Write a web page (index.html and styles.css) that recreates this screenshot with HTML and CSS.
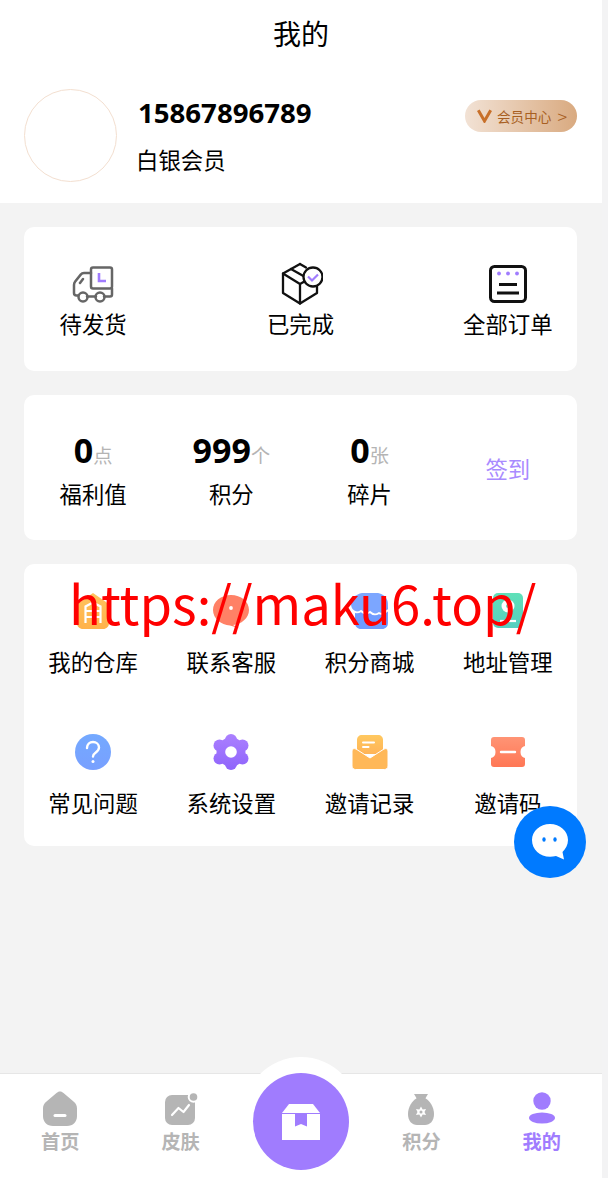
FILE: index.html
```html
<!DOCTYPE html>
<html lang="zh">
<head>
<meta charset="utf-8">
<title>我的</title>
<link rel="stylesheet" href="styles.css">
</head>
<body>
<div class="page">
  <header class="top">
    <h1 class="title">我的</h1>
    <div class="profile">
      <div class="avatar"></div>
      <div class="who">
        <div class="phone">15867896789</div>
        <div class="level">白银会员</div>
      </div>
      <div class="vip">
        <svg class="vip-v" viewBox="0 0 15 14"><path d="M1.300 1.200L7.500 12 13.700 1.200" fill="none" stroke="#c8702a" stroke-width="3"/></svg>
        <span class="vip-text">会员中心</span>
        <span class="vip-arrow">&gt;</span>
      </div>
    </div>
  </header>

  <main class="content">
    <section class="card orders">
      <div class="cell">
        <svg class="ico-order" viewBox="0 0 44 44"><g fill="none" stroke="#666" stroke-width="2.500" stroke-linejoin="round" stroke-linecap="round"><rect x="20" y="5.500" width="21" height="21" rx="2"/><path d="M20 11h-7c-1.500 0-2.500.6-3.300 1.600l-5.500 7c-.8 1-1.200 2-1.200 3.400v8c0 1.500 1 2.500 2.500 2.500h1.500M16 34.500h9M33 34.500h6c1.300 0 2-.8 2-2v-6"/><circle cx="12" cy="35" r="4.500"/><circle cx="29" cy="35" r="4.500"/><path d="M9 21l3-4"/></g><path d="M28 11v8h7" fill="none" stroke="#a07cfe" stroke-width="2.600"/></svg>
        <div class="label">待发货</div>
      </div>
      <div class="cell">
        <svg class="ico-order" viewBox="0 0 44 44"><g fill="none" stroke="#111" stroke-width="2.300" stroke-linejoin="round" stroke-linecap="round"><path d="M21 2L4 11.500V31l17 10.500L38 31v-9"/><path d="M4 11.500L21 22v19.500M21 22l7-4M12 7l15 8.500M21 2l6 3.500"/><circle cx="34" cy="15" r="9.500" fill="#fff"/></g><path d="M29 14.500l4 4 6-6" fill="none" stroke="#a07cfe" stroke-width="2.200"/></svg>
        <div class="label">已完成</div>
      </div>
      <div class="cell">
        <svg class="ico-order" viewBox="0 0 44 44"><rect x="4.500" y="4.500" width="35" height="35" rx="4" fill="none" stroke="#111" stroke-width="3"/><circle cx="13" cy="11.500" r="1.900" fill="#a07cfe"/><circle cx="22" cy="11.500" r="1.900" fill="#a07cfe"/><circle cx="31" cy="11.500" r="1.900" fill="#a07cfe"/><path d="M13 22.500h18M11 31h22" stroke="#111" stroke-width="2.800"/></svg>
        <div class="label">全部订单</div>
      </div>
    </section>

    <section class="card stats">
      <div class="cell">
        <div class="stat"><b class="num">0</b><span class="unit">点</span></div>
        <div class="label">福利值</div>
      </div>
      <div class="cell">
        <div class="stat"><b class="num">999</b><span class="unit">个</span></div>
        <div class="label">积分</div>
      </div>
      <div class="cell">
        <div class="stat"><b class="num">0</b><span class="unit">张</span></div>
        <div class="label">碎片</div>
      </div>
      <div class="cell sign">签到</div>
    </section>

    <section class="card menu">
      <div class="cell">
        <svg class="ico-menu" viewBox="0 0 38 36"><defs><linearGradient id="gOrange" x1="0" y1="0" x2="0" y2="1"><stop offset="0" stop-color="#ffc35e"/><stop offset="1" stop-color="#ffb24a"/></linearGradient></defs><path d="M19 0l13 9c2 1.500 3 3 3 5.500V30c0 3.500-2.500 6-6 6H9c-3.500 0-6-2.500-6-6V14.500C3 12 4 10.500 6 9z" fill="url(#gOrange)"/><path d="M11.500 30V13.500l7.500-4 7.500 4V30M11.500 18h15M11.500 24h15" fill="none" stroke="#fff" stroke-width="2.200"/></svg>
        <div class="label">我的仓库</div>
      </div>
      <div class="cell">
        <svg class="ico-menu" viewBox="0 0 38 36"><path d="M19 2c10 0 18 6.500 18 15 0 8-8 14.500-16 15l7 3.500-10-3C9 32 1 25.500 1 17 1 8.500 9 2 19 2z" fill="#ff8166"/><circle cx="19" cy="15" r="1.900" fill="#fff"/></svg>
        <div class="label">联系客服</div>
      </div>
      <div class="cell">
        <svg class="ico-menu" viewBox="0 0 38 36"><path d="M4 12h33v18c0 3.500-2.500 6-6 6H10c-3.500 0-6-2.500-6-6z" fill="#6f9bff"/><path d="M11 0h16c5 1 10 5 10 11 0 5-3 9-8 9H9c-5 0-9-4-9-9S5 1 11 0z" fill="#7ca6ff"/><path d="M1 17c3 3 6 3 9 1 3 3 6 3 9 1 3 3 6 3 9 1 3 2 6 0 9-3" fill="none" stroke="#fff" stroke-width="1.800"/></svg>
        <div class="label">积分商城</div>
      </div>
      <div class="cell">
        <svg class="ico-menu" viewBox="0 0 38 36"><defs><linearGradient id="gTeal" x1="0" y1="0" x2="0" y2="1"><stop offset="0" stop-color="#5fe0b8"/><stop offset="1" stop-color="#57cfc0"/></linearGradient></defs><rect x="4" y="0" width="30" height="35" rx="5" fill="url(#gTeal)"/><circle cx="19" cy="13" r="6.500" fill="#fff"/><circle cx="19" cy="13" r="2" fill="#5fe0b8"/><path d="M11 28h16" stroke="#fff" stroke-width="2.200"/></svg>
        <div class="label">地址管理</div>
      </div>
      <div class="cell">
        <svg class="ico-menu" viewBox="0 0 38 36"><defs><linearGradient id="gBlue" x1="0" y1="0" x2="0" y2="1"><stop offset="0" stop-color="#74a9ff"/><stop offset="1" stop-color="#78a0ff"/></linearGradient></defs><circle cx="19" cy="18" r="18" fill="url(#gBlue)"/><path d="M13 14c0-3.500 2.700-6 6-6s6 2.300 6 5.500c0 2.500-1.500 3.700-3.200 4.900-1.600 1.100-2.800 2-2.800 4.100" fill="none" stroke="#fff" stroke-width="2.400" stroke-linecap="round"/><circle cx="19" cy="27.500" r="1.500" fill="#fff"/></svg>
        <div class="label">常见问题</div>
      </div>
      <div class="cell">
        <svg class="ico-menu" viewBox="0 0 38 36"><defs><linearGradient id="gPurple" gradientUnits="userSpaceOnUse" x1="0" y1="0" x2="0" y2="36"><stop offset="0" stop-color="#ab80ff"/><stop offset="1" stop-color="#8f64fb"/></linearGradient></defs><g fill="url(#gPurple)"><circle cx="19" cy="18" r="14.500"/><circle cx="19" cy="6" r="6"/><circle cx="19" cy="30" r="6"/><circle cx="7.500" cy="11.500" r="6"/><circle cx="30.500" cy="11.500" r="6"/><circle cx="7.500" cy="24.500" r="6"/><circle cx="30.500" cy="24.500" r="6"/></g><circle cx="19" cy="18" r="5.800" fill="#fff"/></svg>
        <div class="label">系统设置</div>
      </div>
      <div class="cell">
        <svg class="ico-menu" viewBox="0 0 38 36"><defs><linearGradient id="gMail" x1="0" y1="0" x2="0" y2="1"><stop offset="0" stop-color="#ffc85f"/><stop offset="1" stop-color="#ffb457"/></linearGradient></defs><path d="M6 6c0-3 2-5 5-5h16c3 0 5 2 5 5v14H6z" fill="url(#gMail)"/><path d="M12 8.500h11M12 13h5.500" stroke="#fff" stroke-width="2" stroke-linecap="round"/><path d="M1 17c0-2 2-3 4-2l14 9 14-9c2-1 4 0 4 2v15c0 2-1.500 3.500-3.500 3.500h-29C2.500 35.500 1 34 1 32z" fill="#ffb858" stroke="#fff" stroke-width="1"/></svg>
        <div class="label">邀请记录</div>
      </div>
      <div class="cell">
        <svg class="ico-menu" viewBox="0 0 38 36"><defs><linearGradient id="gTicket" x1="0" y1="0" x2="0" y2="1"><stop offset="0" stop-color="#ff9475"/><stop offset="1" stop-color="#ff7755"/></linearGradient></defs><path d="M5 3h28c2 0 3 1 3 3v6c-3 .5-4.500 3-4.500 6s1.500 5.500 4.500 6v6c0 2-1 3-3 3H5c-2 0-3-1-3-3v-6c3-.5 4.500-3 4.500-6S5 12.500 2 12V6c0-2 1-3 3-3z" fill="url(#gTicket)"/><path d="M12 18h14" stroke="#fff" stroke-width="2.400" stroke-linecap="round"/></svg>
        <div class="label">邀请码</div>
      </div>
    </section>
  </main>

  <nav class="nav">
    <div class="nav-item">
      <svg class="nav-ico" viewBox="0 0 36 36"><path d="M18 .5c1.500 0 2.500.6 3.500 1.500l10 8.500c2.500 2 3.500 4 3.500 7V25c0 6-4 10-10 10H11C5 35 1 31 1 25v-7.500c0-3 1-5 3.500-7l10-8.500c1-.9 2-1.500 3.500-1.500z" fill="#b5b5b5"/><path d="M13 24.500h10" stroke="#fff" stroke-width="3" stroke-linecap="round"/></svg>
      <span>首页</span>
    </div>
    <div class="nav-item">
      <svg class="nav-ico" viewBox="0 0 36 36"><rect x="2" y="4" width="30" height="30" rx="7" fill="#b5b5b5"/><circle cx="30.500" cy="6" r="5.800" fill="#fff"/><circle cx="30.500" cy="6" r="3.800" fill="#b5b5b5"/><path d="M9 24l6.500-7 5 4 5.500-7" fill="none" stroke="#fff" stroke-width="2.200" stroke-linecap="round" stroke-linejoin="round"/></svg>
      <span>皮肤</span>
    </div>
    <div class="nav-item nav-center">
      <div class="halo"></div>
      <div class="center-btn">
        <svg class="center-ico" viewBox="0 0 38 36"><path d="M7 0h24l7 9H0z" fill="#fff"/><path d="M0 10h13v12.500l6-2.500 6 2.500V10h13v26H0z" fill="#fff"/></svg>
      </div>
    </div>
    <div class="nav-item">
      <svg class="nav-ico" viewBox="0 0 36 36"><path d="M11 3h14l-3 5h-8z" fill="#b5b5b5"/><path d="M14 7h8c5 3 9 9 9 16 0 7-4 11-9 11h-8c-5 0-9-4-9-11 0-7 4-13 9-16z" fill="#b5b5b5"/><path d="M18 15.500l1.700 2.900 3.300-.4-1.500 3 1.500 3-3.300-.4L18 26.500l-1.700-2.900-3.300.4 1.500-3-1.500-3 3.300.4z" fill="#fff"/><circle cx="18" cy="21" r="1.500" fill="#b5b5b5"/></svg>
      <span>积分</span>
    </div>
    <div class="nav-item active">
      <svg class="nav-ico" viewBox="0 0 36 36"><circle cx="18" cy="10" r="8.700" fill="#a07cfe"/><ellipse cx="18" cy="27" rx="13" ry="5.500" fill="#a07cfe"/></svg>
      <span>我的</span>
    </div>
  </nav>

  <div class="watermark">https://maku6.top/</div>
  <div class="chat">
    <svg class="chat-ico" viewBox="0 0 38 38"><path d="M19 1c10 0 18 7 18 16 0 5-2.500 9-5.500 12l1.500 7.500-8-3.500c-2 .5-4 .8-6 .8C9 33.800 1 26.500 1 17 1 8 9 1 19 1z" fill="#fff"/><ellipse cx="13" cy="16.500" rx="1.700" ry="2.300" fill="#007aff"/><ellipse cx="24" cy="16.500" rx="1.700" ry="2.300" fill="#007aff"/></svg>
  </div>
</div>
</body>
</html>
```

FILE: styles.css
```css
* { box-sizing: border-box; margin: 0; padding: 0; }
html, body { height: 100%; overflow: hidden; background: #f3f3f4; }
body { font-family: "Noto Sans CJK SC", "Noto Sans", sans-serif; color: #000; }
.page { position: relative; width: 602px; height: 1178px; display: flex; flex-direction: column; background: #f3f3f3; }

.top { background: #fff; height: 203px; flex: none; }
.title { font-size: 28px; font-weight: 400; line-height: 66px; text-align: center; }
.profile { display: flex; align-items: center; padding: 23px 25px 0 24px; }
.avatar { width: 93px; height: 93px; border: 1px solid #f3dfd0; border-radius: 50%; flex: none; }
.who { flex: 1; margin-left: 19px; margin-bottom: 4px; }
.phone { font-family: "Open Sans", "Noto Sans", sans-serif; font-size: 27.600px; font-weight: 700; line-height: 40px; margin-left: 2px; margin-top: -1px; }
.level { font-size: 22.400px; line-height: 32px; margin-top: 11px; }
.vip { width: 112px; height: 32px; margin-top: -40px; border-radius: 16px; display: flex; align-items: center; padding-left: 12px; background: linear-gradient(90deg, #f2e2d5, #d9aa80); color: #a85f22; flex: none; }
.vip-v { width: 15px; height: 14px; flex: none; }
.vip-text { font-size: 13.600px; margin-left: 5px; line-height: 32px; }
.vip-arrow { font-size: 18px; font-weight: 300; margin-left: 6px; line-height: 32px; }

.content { flex: 1; padding: 24px 25px 0 24px; display: flex; flex-direction: column; gap: 24px; }
.card { background: #fff; border-radius: 10px; width: 553px; }
.cell { width: 138.250px; display: flex; flex-direction: column; align-items: center; flex: none; }
.label { font-size: 22.400px; line-height: 30px; white-space: nowrap; }

.orders { height: 144px; display: flex; justify-content: space-between; padding-top: 35px; }
.ico-order { width: 44px; height: 44px; margin-bottom: 2px; }

.stats { height: 145px; display: flex; align-items: center; padding-top: 1px; }
.stat { display: flex; align-items: baseline; height: 44px; margin-bottom: 6px; }
.num { font-family: "Open Sans", "Noto Sans", sans-serif; font-size: 34px; line-height: 44px; font-weight: 700; }
.unit { font-size: 19.200px; color: #b4b4b4; }
.sign { font-size: 22.400px; color: #a98bff; }

.menu { height: 282px; display: grid; grid-template-columns: repeat(4, 138.250px); row-gap: 58px; padding-top: 29px; align-content: start; }
.ico-menu { width: 38px; height: 36px; margin-bottom: 17px; display: block; }

.nav { position: relative; height: 105px; flex: none; background: #fff; border-top: 1px solid #e6e6e6; display: grid; grid-template-columns: repeat(5, 1fr); }
.nav-item { display: flex; flex-direction: column; align-items: center; padding-top: 17px; font-size: 19.200px; font-weight: 700; color: #b5b5b5; line-height: 30px; }
.nav-item.active { color: #a07cfe; }
.nav-ico { width: 36px; height: 36px; display: block; margin-bottom: -1px; }
.nav-center { position: relative; }
.halo { position: absolute; left: 2px; top: -17px; width: 116px; height: 116px; border-radius: 50%; background: #fff; }
.center-btn { position: absolute; left: 12px; top: -1px; width: 96px; height: 97px; border-radius: 50%; background: #a07cfe; display: flex; align-items: center; justify-content: center; }
.center-ico { width: 38px; height: 36px; }

.watermark { position: absolute; left: 69px; top: 562px; font-family: "Noto Sans CJK SC", "Noto Sans", sans-serif; font-size: 52.600px; line-height: 80px; color: #f00; white-space: nowrap; }
.chat { position: absolute; left: 514px; top: 806px; width: 72px; height: 72px; border-radius: 50%; background: #007aff; display: flex; align-items: center; justify-content: center; }
.chat-ico { width: 38px; height: 38px; }
```
